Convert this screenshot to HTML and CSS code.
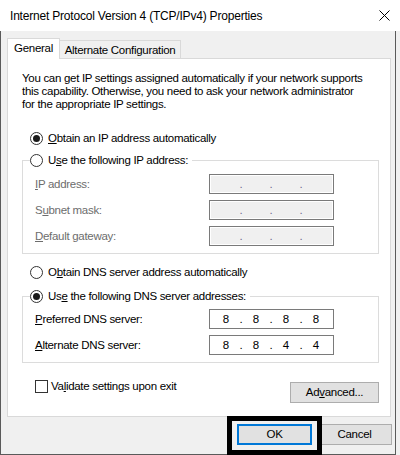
FILE: index.html
```html
<!DOCTYPE html>
<html>
<head>
<meta charset="utf-8">
<title>Internet Protocol Version 4 (TCP/IPv4) Properties</title>
<link rel="stylesheet" href="styles.css">
</head>
<body>
<div class="titlebar">
  <span class="title">Internet Protocol Version 4 (TCP/IPv4) Properties</span>
  <svg class="close" width="11" height="11" viewBox="0 0 11 11"><path d="M0.5 0.5L10.5 10.5M10.5 0.5L0.5 10.5" stroke="#000" stroke-width="1" fill="none"/></svg>
</div>
<div class="client">
  <div class="tabs">
    <div class="tab active">General</div>
    <div class="tab">Alternate Configuration</div>
  </div>
  <div class="page">
    <p class="desc">You can get IP settings assigned automatically if your network supports<br>this capability. Otherwise, you need to ask your network administrator<br>for the appropriate IP settings.</p>

    <div class="opt first"><span class="radio checked"></span><span><u>O</u>btain an IP address automatically</span></div>
    <fieldset class="group ip">
      <legend><span class="radio"></span><span>U<u>s</u>e the following IP address:</span></legend>
      <div class="fields">
        <span class="lbl dis"><u>I</u>P address:</span>
        <div class="ipbox dis"><span class="oct"></span><span class="dot">.</span><span class="oct"></span><span class="dot">.</span><span class="oct"></span><span class="dot">.</span><span class="oct"></span></div>
        <span class="lbl dis">S<u>u</u>bnet mask:</span>
        <div class="ipbox dis"><span class="oct"></span><span class="dot">.</span><span class="oct"></span><span class="dot">.</span><span class="oct"></span><span class="dot">.</span><span class="oct"></span></div>
        <span class="lbl dis"><u>D</u>efault gateway:</span>
        <div class="ipbox dis"><span class="oct"></span><span class="dot">.</span><span class="oct"></span><span class="dot">.</span><span class="oct"></span><span class="dot">.</span><span class="oct"></span></div>
      </div>
    </fieldset>

    <div class="opt third"><span class="radio"></span><span>O<u>b</u>tain DNS server address automatically</span></div>
    <fieldset class="group dns">
      <legend><span class="radio checked"></span><span>Us<u>e</u> the following DNS server addresses:</span></legend>
      <div class="fields">
        <span class="lbl"><u>P</u>referred DNS server:</span>
        <div class="ipbox"><span class="oct">8</span><span class="dot">.</span><span class="oct">8</span><span class="dot">.</span><span class="oct">8</span><span class="dot">.</span><span class="oct">8</span></div>
        <span class="lbl"><u>A</u>lternate DNS server:</span>
        <div class="ipbox"><span class="oct">8</span><span class="dot">.</span><span class="oct">8</span><span class="dot">.</span><span class="oct">4</span><span class="dot">.</span><span class="oct">4</span></div>
      </div>
    </fieldset>

    <div class="bottomrow">
      <div class="check"><span class="box"></span><span>Va<u>l</u>idate settings upon exit</span></div>
      <div class="btn adv">Ad<u>v</u>anced...</div>
    </div>
  </div>
  <div class="actions">
    <div class="btn default">OK</div>
    <div class="btn">Cancel</div>
  </div>
</div>
</body>
</html>
```
FILE: styles.css
```css
* { box-sizing: border-box; }
html, body { margin: 0; padding: 0; }
body {
  width: 400px;
  height: 455px;
  overflow: hidden;
  background: #f0f0f0;
  font-family: "Liberation Sans", Arial, sans-serif;
  font-size: 11.5px;
  letter-spacing: -0.3px;
  color: #000;
}
u { text-decoration: underline; text-underline-offset: 1px; }

.titlebar {
  width: 400px;
  height: 31px;
  background: #fff;
  display: flex;
  align-items: center;
  padding-left: 10px;
}
.title { font-size: 12px; letter-spacing: -0.2px; }
.close { margin-left: auto; margin-right: 10px; display: block; }

.client {
  width: 396px;
  height: 424px;
  border: 1px solid #5a5a5a;
  border-top: none;
  padding: 7px 0 0 6px;
}

.tabs {
  display: flex;
  align-items: flex-end;
  height: 20px;
}
.tab {
  width: 121px;
  height: 18px;
  border: 1px solid #d9d9d9;
  border-left: none;
  border-bottom: none;
  background: #f0f0f0;
  text-align: center;
  line-height: 17px;
  padding-top: 1px;
  white-space: nowrap;
}
.tab.active {
  width: 53px;
  height: 21px;
  border-left: 1px solid #d9d9d9;
  background: #fff;
  margin-bottom: -1px;
  line-height: 19px;
  padding-top: 0;
  position: relative;
  z-index: 1;
}

.page {
  width: 384px;
  height: 359px;
  border: 1px solid #d9d9d9;
  background: #fff;
  padding: 13px 11px 0 14px;
}
.desc {
  margin: 0;
  line-height: 13px;
  white-space: nowrap;
}

.opt {
  display: flex;
  align-items: center;
  gap: 5px;
  height: 17px;
  line-height: 17px;
  margin-left: 8px;
  white-space: nowrap;
}
.opt.first { margin-top: 19px; }
.opt.third { margin-top: 10px; }

.radio {
  width: 13px;
  height: 13px;
  border: 1px solid #333;
  border-radius: 50%;
  background: #fff;
  flex: none;
  position: relative;
}
.radio.checked::after {
  content: "";
  position: absolute;
  left: 2px;
  top: 2px;
  width: 7px;
  height: 7px;
  border-radius: 50%;
  background: #1a1a1a;
}

.group {
  margin: 5px 0 0 0;
  border: 1px solid #dcdcdc;
  padding: 5px 0 7px 7px;
  min-width: 0;
}
.group.dns { margin-top: 7px; padding-top: 4px; }
.group legend {
  display: flex;
  align-items: center;
  gap: 5px;
  height: 17px;
  line-height: 17px;
  padding: 0 4px 0 0;
  white-space: nowrap;
}

.fields {
  display: grid;
  grid-template-columns: 174px 125px;
  row-gap: 6px;
  align-items: center;
  padding-left: 5px;
}
.lbl { white-space: nowrap; }
.lbl.dis { color: #6d6d6d; }

.ipbox {
  width: 125px;
  height: 20px;
  border: 1px solid #7a7a7a;
  background: #fff;
  display: flex;
  align-items: center;
  padding-left: 3px;
  line-height: 18px;
  letter-spacing: 0;
}
.ipbox.dis {
  background: #f0f0f0;
  box-shadow: inset 0 0 0 1px #fff;
}
.oct { width: 26px; text-align: center; }
.dot { width: 4px; text-align: center; }
.ipbox.dis .dot { color: #6e6e8c; }

.bottomrow {
  margin-top: 17px;
  display: flex;
  justify-content: space-between;
  align-items: flex-start;
}
.check {
  display: flex;
  align-items: center;
  gap: 3px;
  height: 13px;
  line-height: 13px;
  margin-left: 13px;
  white-space: nowrap;
}
.check .box {
  width: 13px;
  height: 13px;
  border: 1px solid #333;
  background: #fff;
  flex: none;
}

.btn {
  width: 75px;
  height: 21px;
  border: 1px solid #adadad;
  background: #e1e1e1;
  text-align: center;
  line-height: 19px;
  white-space: nowrap;
}
.btn.adv { width: 89px; margin-top: 2px; }
.btn.default {
  border: 2px solid #0078d7;
  line-height: 17px;
  position: relative;
}
.btn.default::after {
  content: "";
  position: absolute;
  left: -12px;
  right: -12px;
  top: -10px;
  bottom: -12px;
  border: 5px solid #000;
}

.actions {
  display: flex;
  justify-content: flex-end;
  gap: 5px;
  margin-top: 7px;
  padding-right: 3px;
}
```
